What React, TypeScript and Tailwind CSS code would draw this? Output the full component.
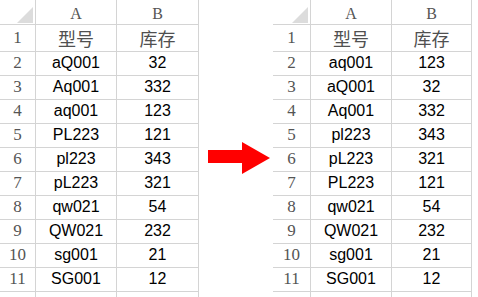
import React from "react";

type Row = [string, string];

const leftRows: Row[] = [
  ["aQ001", "32"],
  ["Aq001", "332"],
  ["aq001", "123"],
  ["PL223", "121"],
  ["pl223", "343"],
  ["pL223", "321"],
  ["qw021", "54"],
  ["QW021", "232"],
  ["sg001", "21"],
  ["SG001", "12"],
];

const rightRows: Row[] = [
  ["aq001", "123"],
  ["aQ001", "32"],
  ["Aq001", "332"],
  ["pl223", "343"],
  ["pL223", "321"],
  ["PL223", "121"],
  ["qw021", "54"],
  ["QW021", "232"],
  ["sg001", "21"],
  ["SG001", "12"],
];

const line = "border-[#d4d4d4]";
const serif = "font-['Liberation_Serif','DejaVu_Serif',serif] text-[#555]";
const sans = "font-['Liberation_Sans',Arial,sans-serif] text-[16px] text-black";

const Sheet = ({ rows, cols }: { rows: Row[]; cols: string }) => {
  return (
    <div className={`grid ${cols} auto-rows-[24px] grid-rows-[25px_27px]`}>
      {/* header */}
      <div className={`relative border-r border-b ${line}`}>
        <div className="absolute right-[2px] bottom-[1px] w-0 h-0 border-l-[16px] border-l-transparent border-b-[16px] border-b-[#dcdcdc]"></div>
      </div>
      <div className={`flex items-end justify-center border-r border-b ${line} ${serif} text-[16px] leading-[20px]`}>A</div>
      <div className={`flex items-end justify-center border-r border-b ${line} ${serif} text-[16px] leading-[20px]`}>B</div>

      {/* row 1 */}
      <div className={`flex items-end justify-center pb-[1px] border-r border-b ${line} ${serif} text-[17px]`}>1</div>
      <div className={`flex items-end justify-center border-r border-b ${line} font-['Noto_Sans_CJK_SC',sans-serif] text-[18px] text-[#505050] leading-[25px]`}>型号</div>
      <div className={`flex items-end justify-center border-r border-b ${line} font-['Noto_Sans_CJK_SC',sans-serif] text-[18px] text-[#505050] leading-[25px]`}>库存</div>

      {rows.map((r, i) => (
        <React.Fragment key={i}>
          <div className={`flex items-end justify-center pb-[1px] border-r border-b ${line} ${serif} text-[17px] leading-[22px]`}>{i + 2}</div>
          <div className={`flex items-end justify-center pb-[2px] border-r border-b ${line} ${sans} leading-[20px]`}>{r[0]}</div>
          <div className={`flex items-end justify-center pb-[2px] border-r border-b ${line} ${sans} leading-[20px]`}>{r[1]}</div>
        </React.Fragment>
      ))}

      {/* next row, cut off */}
      <div className={`border-r ${line}`}></div>
      <div className={`border-r ${line}`}></div>
      <div className={`border-r ${line}`}></div>
    </div>
  );
};

export default function App() {
  return (
    <div className="w-[478px] h-[297px] overflow-hidden bg-white flex">
      <div className="w-[198px] shrink-0">
        <Sheet rows={leftRows} cols="grid-cols-[36px_81px_82px]" />
      </div>
      <div className="w-[76px] shrink-0 pt-[142px] pl-[10px]">
        <svg width="62" height="32" viewBox="0 0 62 32">
          <polygon points="0,8 34,8 34,0 62,16 34,32 34,21 0,21" fill="#ff0000" />
        </svg>
      </div>
      <div className="w-[199px] shrink-0 -ml-[1px]">
        <Sheet rows={rightRows} cols="grid-cols-[38px_81px_80px]" />
      </div>
    </div>
  );
}
